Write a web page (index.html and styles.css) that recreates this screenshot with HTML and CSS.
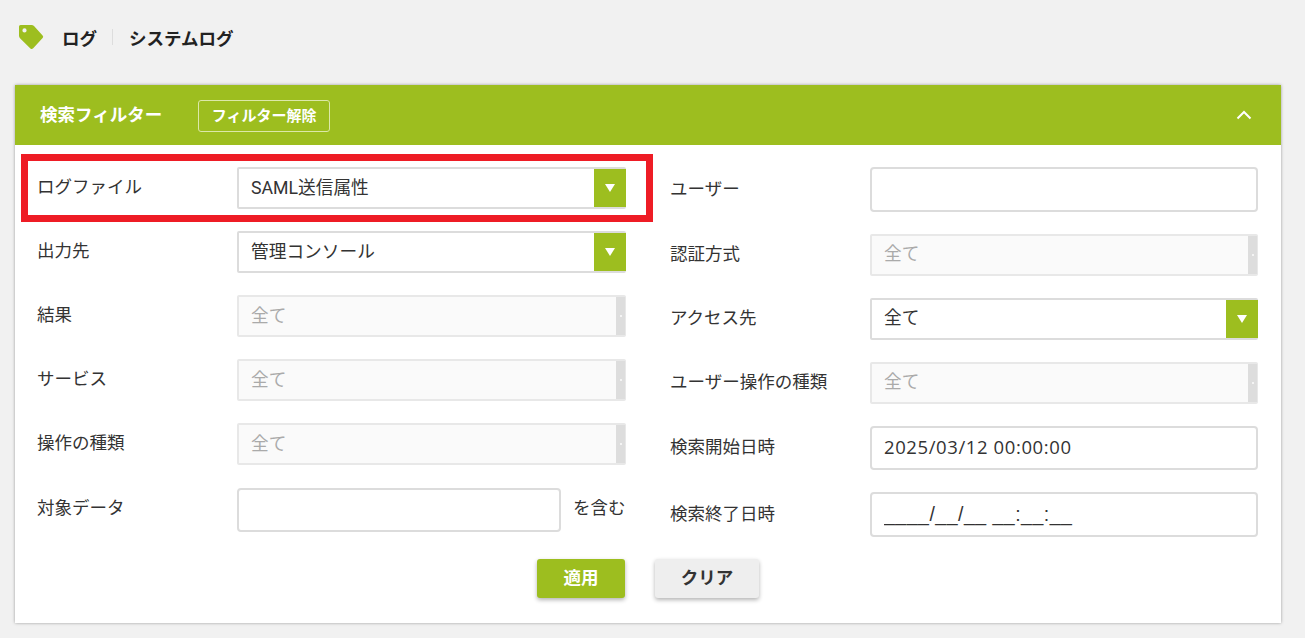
FILE: index.html
```html
<!DOCTYPE html>
<html lang="ja">
<head>
<meta charset="utf-8">
<title>システムログ</title>
<link rel="stylesheet" href="styles.css">
</head>
<body>
<nav class="crumbs">
  <svg class="tag" viewBox="0 0 26 26" width="26" height="26" aria-hidden="true"><path fill-rule="evenodd" fill="#9dbe1f" d="M2.5 1H13.5Q15 1 16 2L24.6 11.4Q25.8 12.8 24.6 14.1L15.2 24.2Q13.8 25.6 12.4 24.4L2 14.2Q1 13.2 1 11.8V2.5Q1 1 2.5 1ZM6.5 4.3A2.1 2.1 0 1 0 6.5 8.5A2.1 2.1 0 1 0 6.5 4.3Z"/></svg>
  <span class="crumb">ログ</span>
  <span class="crumb-sep"></span>
  <span class="crumb">システムログ</span>
</nav>
<main class="card">
  <div class="highlight"></div>
  <header class="card-head">
    <h2 class="card-title">検索フィルター</h2>
    <button class="clear-filter" type="button">フィルター解除</button>
    <svg class="chevron" viewBox="0 0 16 10" width="16" height="10" aria-hidden="true"><path d="M1.5 8.5L8 2L14.5 8.5" fill="none" stroke="#fff" stroke-width="2"/></svg>
  </header>
  <section class="card-body">
    <div class="col">
      <div class="row">
        <label class="label">ログファイル</label>
        <div class="select"><span class="value">SAML送信属性</span><span class="arrow"></span></div>
      </div>
      <div class="row">
        <label class="label">出力先</label>
        <div class="select"><span class="value">管理コンソール</span><span class="arrow"></span></div>
      </div>
      <div class="row">
        <label class="label">結果</label>
        <div class="select disabled"><span class="value">全て</span><span class="grip"></span></div>
      </div>
      <div class="row">
        <label class="label">サービス</label>
        <div class="select disabled"><span class="value">全て</span><span class="grip"></span></div>
      </div>
      <div class="row">
        <label class="label">操作の種類</label>
        <div class="select disabled"><span class="value">全て</span><span class="grip"></span></div>
      </div>
      <div class="row">
        <label class="label up">対象データ</label>
        <input class="input short" type="text">
        <span class="suffix">を含む</span>
      </div>
    </div>
    <div class="col col-right">
      <div class="row">
        <label class="label">ユーザー</label>
        <input class="input tall" type="text">
      </div>
      <div class="row">
        <label class="label">認証方式</label>
        <div class="select disabled"><span class="value">全て</span><span class="grip"></span></div>
      </div>
      <div class="row">
        <label class="label">アクセス先</label>
        <div class="select"><span class="value">全て</span><span class="arrow"></span></div>
      </div>
      <div class="row">
        <label class="label">ユーザー操作の種類</label>
        <div class="select disabled"><span class="value">全て</span><span class="grip"></span></div>
      </div>
      <div class="row">
        <label class="label">検索開始日時</label>
        <input class="input date" type="text" value="2025/03/12 00:00:00">
      </div>
      <div class="row">
        <label class="label">検索終了日時</label>
        <input class="input tall mask" type="text" value="____/__/__ __:__:__">
      </div>
    </div>
  </section>
  <footer class="actions">
    <button class="btn primary" type="button">適用</button>
    <button class="btn plain" type="button">クリア</button>
  </footer>
</main>
</body>
</html>
```
FILE: styles.css
```css
* { box-sizing: border-box; }
html, body { height: 100%; }
body {
  margin: 0;
  overflow: hidden;
  background: #f1f1f1;
  color: #333;
  font-family: Roboto, "Noto Sans CJK JP", sans-serif;
  font-size: 17.5px;
}
.crumbs {
  display: flex;
  align-items: center;
  height: 85px;
  padding: 0 0 11px 18px;
}
.tag { margin-right: 18px; }
.crumb { font-weight: 700; color: #222; }
.crumb-sep { width: 1px; height: 16px; margin: 0 16px 0 15px; background: #ddd; }
.card {
  position: relative;
  width: 1266px;
  margin-left: 15px;
  background: #fff;
  box-shadow: 0 0 3px rgba(0, 0, 0, .35);
}
.highlight {
  position: absolute;
  left: 6px;
  top: 69px;
  width: 632px;
  height: 68px;
  border: 7px solid #ee1c25;
  pointer-events: none;
}
.card-head {
  display: flex;
  align-items: center;
  height: 60px;
  padding: 0 29px 0 25px;
  background: #9dbe1f;
  color: #fff;
}
.card-title { margin: 0 36px 4px 0; font-size: 17.5px; font-weight: 700; }
.clear-filter {
  height: 32px;
  width: 132px;
  margin-top: 2px;
  padding: 0 0 3px;
  border: 1.5px solid #dce8a8;
  border-radius: 3px;
  background: transparent;
  color: #fff;
  font: 700 15px Roboto, "Noto Sans CJK JP", sans-serif;
}
.chevron { margin-left: auto; }
.card-body {
  display: grid;
  grid-template-columns: 589px 588px;
  column-gap: 44px;
  padding: 22px 0 0 22px;
}
.col { display: flex; flex-direction: column; gap: 22px; }
.row { display: flex; align-items: center; }
.label { flex: 0 0 200px; margin-bottom: 5px; }
.label.up { align-self: flex-start; margin: 7px 0 0; }
.select {
  flex: 1;
  display: flex;
  align-items: stretch;
  height: 42px;
  border: 2px solid #dcdcdc;
  border-radius: 2px;
  background: #fff;
}
.value { flex: 1; padding-left: 12px; font-size: 17.7px; line-height: 38px; }
.col-right .value { line-height: 36px; }
.arrow {
  position: relative;
  flex: 0 0 32px;
  margin-right: -2px;
  background: #9dbe1f;
}
.arrow::after {
  content: "";
  position: absolute;
  left: 11px;
  top: 15px;
  border-style: solid;
  border-width: 8px 5px 0;
  border-color: #fff transparent transparent;
}
.select.disabled { background: #fafafa; border-color: #e8e8e8; color: #aaa; }
.grip {
  position: relative;
  flex: 0 0 9px;
  margin-right: -1px;
  background: #ddd;
}
.grip::after {
  content: "";
  position: absolute;
  left: 4px;
  top: 18px;
  width: 2px;
  height: 2px;
  background: #f4f4f4;
}
.input {
  flex: 1;
  min-width: 0;
  height: 44px;
  padding: 0 12px;
  border: 2px solid #dcdcdc;
  border-radius: 4px;
  background: #fff;
  color: #333;
  font: 17.5px Roboto, "Noto Sans CJK JP", sans-serif;
  outline: none;
}
.input.tall { height: 45px; }
.input.short { flex: 0 0 324px; margin-top: 1px; }
.input.date { padding-bottom: 3px; font: 18.5px "Open Sans", sans-serif; letter-spacing: .6px; }
.input.mask { font: 19.5px "Liberation Sans", sans-serif; letter-spacing: .5px; }
.suffix { margin-left: 12px; margin-bottom: 6px; }
.actions {
  display: flex;
  justify-content: center;
  gap: 30px;
  padding: 22px 0 25px;
}
.btn {
  height: 39px;
  padding: 0 0 4px;
  border: 0;
  border-radius: 3px;
  font: 700 17.5px Roboto, "Noto Sans CJK JP", sans-serif;
  box-shadow: 0 2px 4px rgba(0, 0, 0, .3);
}
.btn.primary { width: 88px; background: #9dbe1f; color: #fff; }
.btn.plain { width: 104px; background: #eee; color: #333; }
```
